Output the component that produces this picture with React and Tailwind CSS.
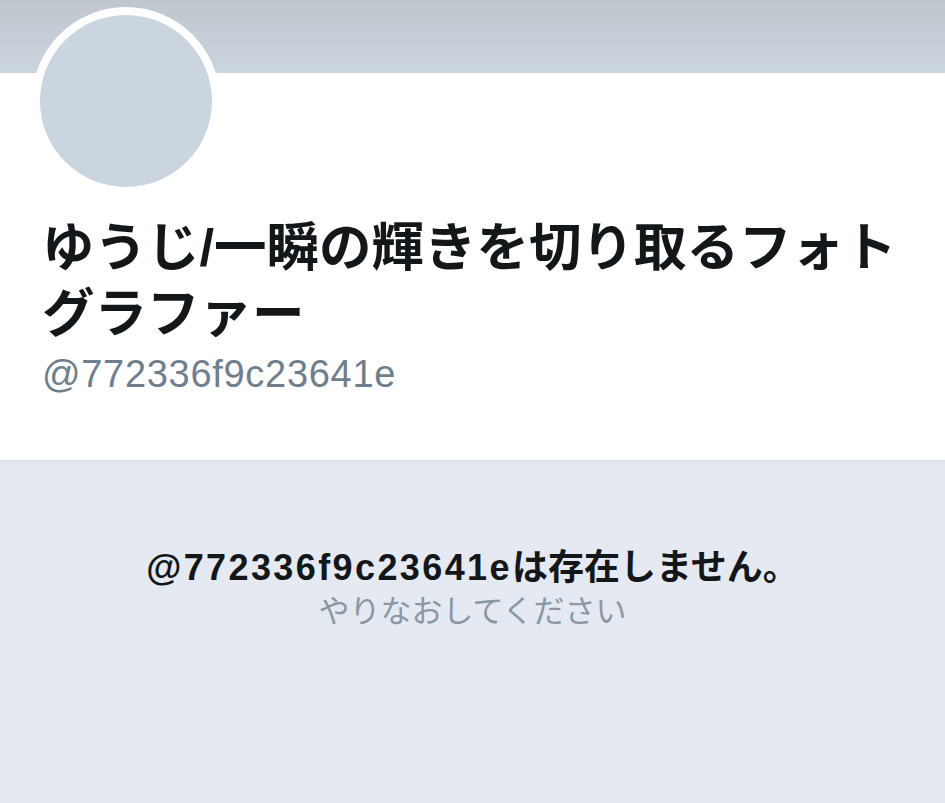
import React from 'react';

const jp = { fontFamily: '"Liberation Sans", "Noto Sans CJK JP", sans-serif' };

export default function App() {
  return (
    <div className="flex min-h-[803px] w-full flex-col bg-white" style={jp}>
      {/* Header banner */}
      <div className="h-[73px] w-full bg-gradient-to-b from-[#bfc6ce] to-[#cbd5de]" />

      {/* Profile */}
      <div className="bg-white px-[42px] pb-[64px]">
        <div className="-ml-[10px] -mt-[66px] h-[188px] w-[188px] rounded-full bg-white p-[8px]">
          <div className="h-full w-full rounded-full bg-[#cad5df]" />
        </div>
        <h1 className="mt-[20px] pr-[6px] text-[52.5px] font-bold leading-[66px] text-[#14171a]">
          ゆうじ/一瞬の輝きを切り取るフォトグラファー
        </h1>
        <p className="mt-[5px] text-[38px] leading-[44px] tracking-[0.7px] text-[#6f7e8c]">@772336f9c23641e</p>
      </div>

      {/* Not found */}
      <div className="flex flex-1 flex-col items-center border-t-[3px] border-[#e0e4eb] bg-[#e5e9f1] pt-[83px]">
        <p className="text-[36px] font-bold leading-[44px] text-[#14171a]">
          <span className="tracking-[2.4px]">@772336f9c23641e</span>は存在しません。
        </p>
        <p className="mt-[3px] text-[31px] leading-[38px] text-[#8a97a4]">やりなおしてください</p>
      </div>
    </div>
  );
}
